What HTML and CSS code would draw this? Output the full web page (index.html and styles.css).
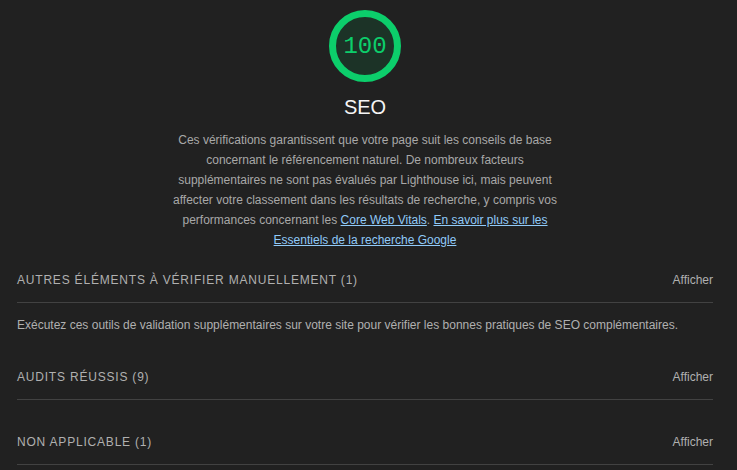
FILE: index.html
```html
<!DOCTYPE html>
<html lang="fr">
<head>
<meta charset="utf-8">
<title>SEO</title>
<link rel="stylesheet" href="styles.css">
</head>
<body>
<main class="category">
  <div class="gauge">
    <svg class="gauge-svg" width="72" height="72" viewBox="0 0 72 72">
      <circle cx="36" cy="36" r="32.5" class="gauge-fill"/>
      <circle cx="36" cy="36" r="32.5" class="gauge-ring"/>
    </svg>
    <span class="gauge-score">100</span>
  </div>
  <h1 class="title">SEO</h1>
  <p class="intro">Ces vérifications garantissent que votre page suit les conseils de base concernant le référencement naturel. De nombreux facteurs supplémentaires ne sont pas évalués par Lighthouse ici, mais peuvent affecter votre classement dans les résultats de recherche, y compris vos performances concernant les <a href="#">Core Web Vitals</a>. <a href="#">En savoir plus sur les Essentiels de la recherche Google</a></p>

  <section class="group group-first">
    <div class="summary"><span class="summary-title">Autres éléments à vérifier manuellement (1)</span><span class="summary-toggle">Afficher</span></div>
    <p class="group-desc">Exécutez ces outils de validation supplémentaires sur votre site pour vérifier les bonnes pratiques de SEO complémentaires.</p>
  </section>
  <section class="group">
    <div class="summary"><span class="summary-title">Audits réussis (9)</span><span class="summary-toggle">Afficher</span></div>
  </section>
  <section class="group">
    <div class="summary"><span class="summary-title">Non applicable (1)</span><span class="summary-toggle">Afficher</span></div>
  </section>
</main>
</body>
</html>
```
FILE: styles.css
```css
html, body {
  margin: 0;
  padding: 0;
  background: #212121;
}
body {
  font-family: "Liberation Sans", Arial, sans-serif;
  color: #a8a8a8;
  font-size: 12px;
}
.category {
  padding: 10px 24px 0 17px;
}
.gauge {
  position: relative;
  width: 72px;
  height: 72px;
  margin: 0 auto;
}
.gauge-svg {
  display: block;
}
.gauge-fill {
  fill: #1c3327;
  stroke: none;
}
.gauge-ring {
  fill: none;
  stroke: #0cce6b;
  stroke-width: 7;
}
.gauge-score {
  position: absolute;
  inset: 0;
  display: flex;
  align-items: center;
  justify-content: center;
  font-family: "Liberation Mono", monospace;
  font-size: 24px;
  color: #0cce6b;
}
.title {
  margin: 13px 0 0;
  text-align: center;
  font-size: 20px;
  line-height: 24px;
  font-weight: normal;
  color: #f5f5f5;
}
.intro {
  max-width: 400px;
  margin: 11px auto 0;
  text-align: center;
  line-height: 20px;
  color: #a8a8a8;
}
.intro a {
  color: #90caf9;
}
.group {
  margin-top: 20px;
}
.group-first {
  margin-top: 8px;
}
.summary {
  display: flex;
  justify-content: space-between;
  align-items: center;
  padding: 14px 0 14px;
  line-height: 16px;
  border-bottom: 1px solid #424242;
}
.summary-title {
  text-transform: uppercase;
  letter-spacing: 0.8px;
  font-size: 12px;
  color: #b0b0b0;
}
.summary-toggle {
  font-size: 12px;
  color: #b0b0b0;
}
.group-desc {
  margin: 12px 0 0;
  line-height: 20px;
  color: #b0b0b0;
}
```
